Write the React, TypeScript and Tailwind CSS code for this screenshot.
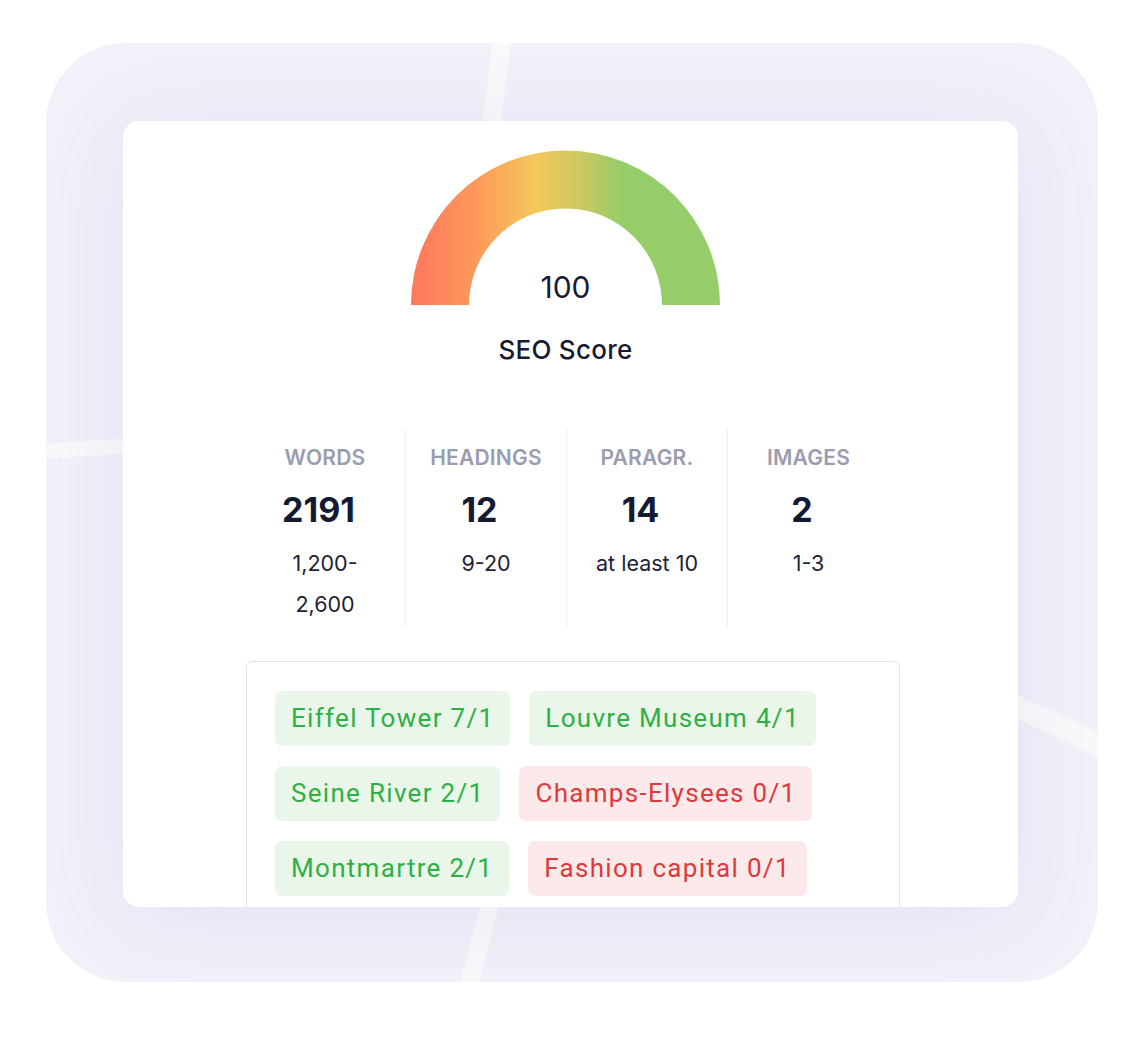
import React from "react";

const chips: { label: string; ok: boolean }[][] = [
  [
    { label: "Eiffel Tower 7/1", ok: true },
    { label: "Louvre Museum 4/1", ok: true },
  ],
  [
    { label: "Seine River 2/1", ok: true },
    { label: "Champs-Elysees 0/1", ok: false },
  ],
  [
    { label: "Montmartre 2/1", ok: true },
    { label: "Fashion capital 0/1", ok: false },
  ],
];

const stats = [
  { label: "WORDS", value: "2191", sub: ["1,200-", "2,600"] },
  { label: "HEADINGS", value: "12", sub: ["9-20"] },
  { label: "PARAGR.", value: "14", sub: ["at least 10"] },
  { label: "IMAGES", value: "2", sub: ["1-3"] },
];

function Gauge() {
  return (
    <svg width="309" height="155" viewBox="0 0 309 155" className="block">
      <defs>
        <linearGradient id="g" x1="0" y1="0" x2="1" y2="0">
          <stop offset="0%" stopColor="#ff775e" />
          <stop offset="22%" stopColor="#fd9b5a" />
          <stop offset="40%" stopColor="#f3c75a" />
          <stop offset="53%" stopColor="#d3c860" />
          <stop offset="68%" stopColor="#96cd69" />
          <stop offset="100%" stopColor="#94cd6a" />
        </linearGradient>
      </defs>
      <path
        d="M0 155 A154.5 154.5 0 0 1 309 155 L251 155 A96.5 96.5 0 0 0 58 155 Z"
        fill="url(#g)"
      />
    </svg>
  );
}

export default function App() {
  return (
    <div className="min-h-[1037px] w-[1146px] bg-white pt-[43px] pl-[46px]" style={{ fontFamily: "Inter, 'Noto Sans', sans-serif" }}>
      <div className="relative h-[939px] w-[1052px] overflow-hidden rounded-[80px] bg-[#f1f1fa] pt-[78px] pl-[77px]">
        <svg className="absolute inset-0" width="1052" height="939" viewBox="0 0 1052 939" fill="none">
          <path d="M457 -10 Q448 60 432 200" stroke="#f9f9fb" strokeWidth="18" />
          <path d="M-10 409 Q40 405 120 401" stroke="#f9f9fb" strokeWidth="15" />
          <path d="M880 632 Q980 662 1070 712" stroke="#f9f9fb" strokeWidth="22" />
          <path d="M458 800 Q440 880 418 960" stroke="#f9f9fb" strokeWidth="18" />
        </svg>
        <div className="relative z-10 h-[786px] w-[895px] overflow-hidden rounded-[16px] bg-white pt-[29px] shadow-[0_10px_90px_rgba(110,110,180,0.11)]">
          <div className="relative ml-[288px] w-[309px]">
            <Gauge />
            <div className="absolute bottom-[0px] left-0 right-0 text-center text-[30px] leading-[36px] text-[#161b33]">
              100
            </div>
          </div>
          <div className="ml-[288px] mt-[29px] w-[309px] text-center text-[26px] font-medium leading-[32px] tracking-[0.01em] text-[#161b33]">
            SEO Score
          </div>
          <div className="ml-[122px] mt-[62px] grid w-[644px] grid-cols-4">
            {stats.map((s, i) => (
              <div
                key={s.label}
                className={
                  "flex flex-col items-center pt-[18px] pb-[3px] " +
                  (i < 3 ? "border-r border-[#f0f0f3]" : "")
                }
              >
                <div className="text-[21px] font-semibold leading-[24px] tracking-[0.01em] text-[#9b9daf]">{s.label}</div>
                <div className="mt-[19px] pr-[13px] text-[34px] font-bold leading-[42px] text-[#151a33]">{s.value}</div>
                <div className="mt-[12px] text-center text-[21.5px] leading-[41px] text-[#1d2236]">
                  {s.sub.map((t) => (
                    <div key={t}>{t}</div>
                  ))}
                </div>
              </div>
            ))}
          </div>
          <div className="ml-[123px] mt-[33px] w-[654px] rounded-[6px] border border-[#e3e4e9] pt-[29px] pl-[28px] pb-[40px]">
            <div className="flex flex-col gap-[20px]">
              {chips.map((row, ri) => (
                <div key={ri} className="flex gap-[19px]">
                  {row.map((c) => (
                    <div
                      key={c.label}
                      className={
                        "flex h-[55px] items-center rounded-[7px] px-[16px] text-[26px] tracking-[0.05em] " +
                        (c.ok ? "bg-[#eaf6ea] text-[#2eb045]" : "bg-[#fce9ea] text-[#dc3a3d]")
                      }
                      style={{ fontFamily: "Roboto, 'Noto Sans', sans-serif" }}
                    >
                      {c.label}
                    </div>
                  ))}
                </div>
              ))}
            </div>
          </div>
        </div>
      </div>
    </div>
  );
}
